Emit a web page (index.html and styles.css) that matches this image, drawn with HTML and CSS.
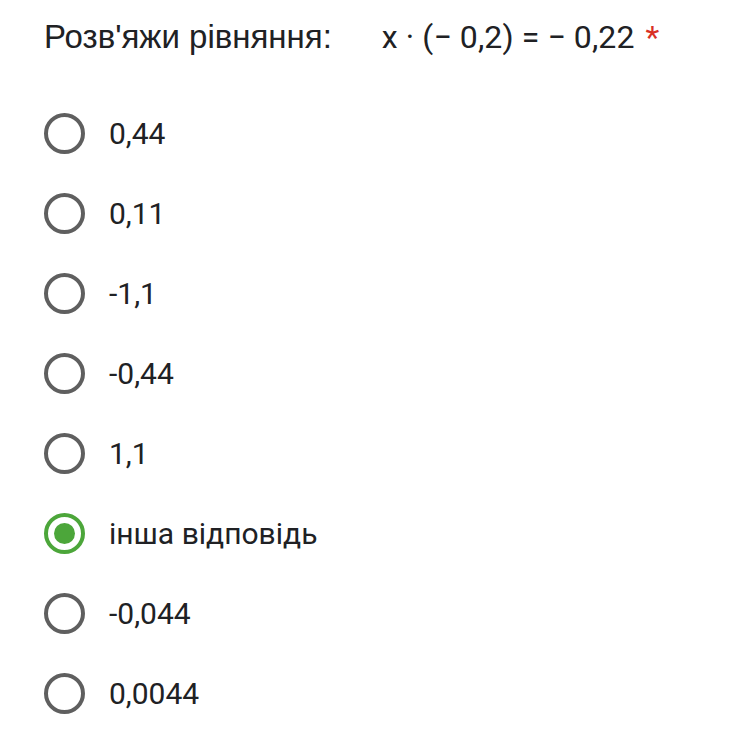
FILE: index.html
```html
<!DOCTYPE html>
<html lang="uk">
  <head>
    <meta charset="UTF-8" />
    <title>Розв'яжи рівняння</title>
    <link rel="stylesheet" href="styles.css">
  </head>
  <body>
    <div class="question">
      <h1>
        <span class="title">Розв'яжи рівняння:</span>
        <span class="equation">x · (− 0,2) = − 0,22</span>
        <span class="required">*</span>
      </h1>
      <ul class="options">
        <li><span class="radio"></span>0,44</li>
        <li><span class="radio"></span>0,11</li>
        <li><span class="radio"></span>-1,1</li>
        <li><span class="radio"></span>-0,44</li>
        <li><span class="radio"></span>1,1</li>
        <li class="-checked"><span class="radio"></span>інша відповідь</li>
        <li><span class="radio"></span>-0,044</li>
        <li><span class="radio"></span>0,0044</li>
      </ul>
    </div>
  </body>
</html>
```

FILE: styles.css
```css
* {
  margin: 0;
  padding: 0;
}

body {
  font-family: Roboto, "Liberation Sans", Arial, sans-serif;
  color: #202124;
  background-color: #fff;
}

.question {
  padding: 15px 0 0 44px;
}

h1 {
  display: flex;
  align-items: baseline;
  font-weight: 400;
  font-size: 32px;
  line-height: 44px;
}

.title {
  font-family: "Liberation Sans", Arial, sans-serif;
  font-size: 33px;
}

.equation {
  margin-left: 50px;
  font-size: 32px;
  letter-spacing: 0.1px;
}

.required {
  margin-left: 11px;
  color: #d93025;
  font-size: 32px;
}

.options {
  list-style: none;
  margin-top: 34px;
}

.options li {
  display: flex;
  align-items: center;
  height: 80px;
  font-size: 30px;
}

.radio {
  box-sizing: border-box;
  display: flex;
  align-items: center;
  justify-content: center;
  width: 41px;
  height: 41px;
  margin-right: 24px;
  border: 4px solid #5f5f5f;
  border-radius: 50%;
}

.-checked .radio {
  border-color: #4ca63a;
}

.-checked .radio::after {
  content: "";
  width: 21px;
  height: 21px;
  border-radius: 50%;
  background-color: #4ca63a;
}
```
